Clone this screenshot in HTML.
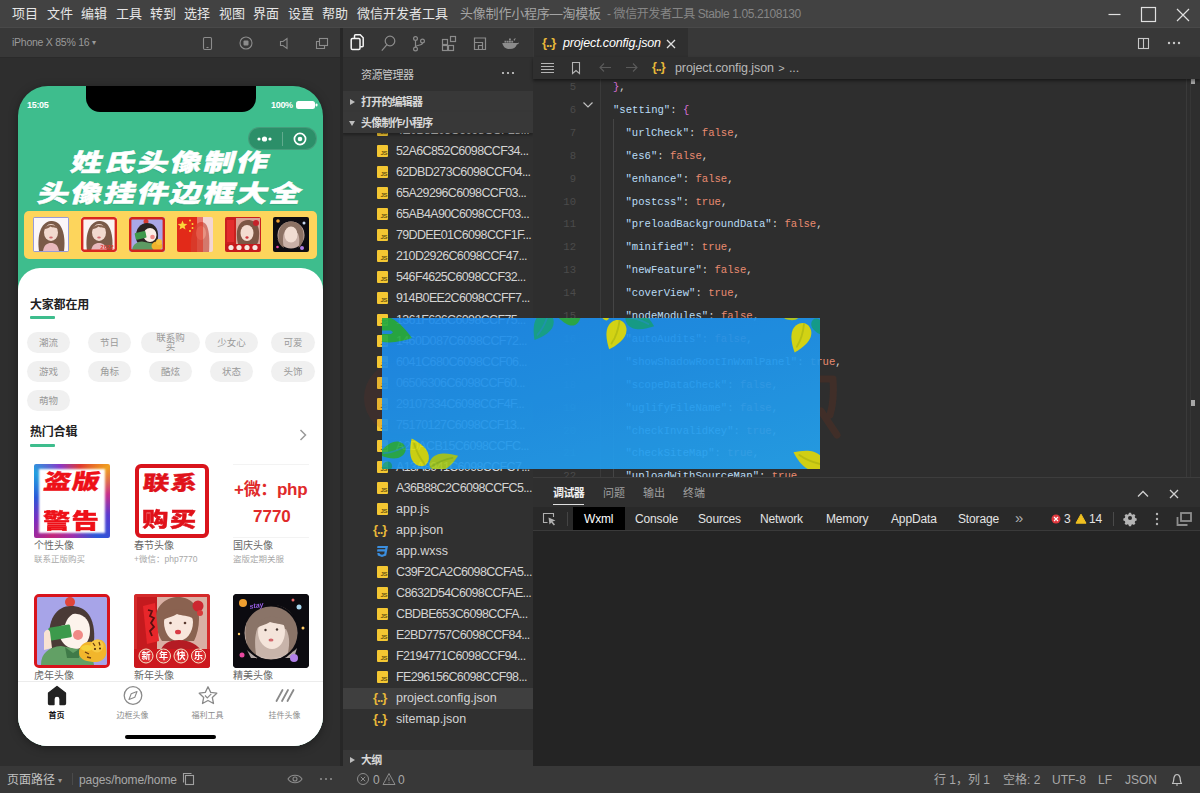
<!DOCTYPE html>
<html lang="zh-CN">
<head>
<meta charset="utf-8">
<title>微信开发者工具</title>
<style>
*{box-sizing:border-box;margin:0;padding:0}
html,body{width:1200px;height:793px;overflow:hidden;background:#2e2e2e}
body{position:relative;font-family:"Liberation Sans","Noto Sans CJK SC",sans-serif;color:#ccc;font-size:12px;line-height:1}
.abs{position:absolute}
.t{position:absolute;white-space:nowrap}
/* ---------- title bar ---------- */
#titlebar{left:0;top:0;width:1200px;height:28px;background:#424242;border-bottom:1px solid #494949}
#titlebar .m{top:6px;font-size:13px;color:#e6e6e6;line-height:15px}
#titlebar .ttl{top:7px;font-size:12px;color:#8f8f8f;line-height:14px}
/* ---------- simulator ---------- */
#simbar{left:0;top:28px;width:341px;height:30px;background:#383838;border-bottom:1px solid #2a2a2a}
#sim{left:0;top:58px;width:341px;height:708px;background:#2e2e2e}
#vsplit{left:340px;top:28px;width:3px;height:738px;background:#272727;z-index:3}
#phone{left:18px;top:86px;width:305px;height:660px;border-radius:30px;background:#3ebd8d;overflow:hidden;box-shadow:0 2px 10px rgba(0,0,0,.35)}

/* ---------- phone inner ---------- */
#phone .notch{left:68px;top:0;width:170px;height:26px;background:#000;border-radius:0 0 14px 14px}
#phone .st{top:14px;font-size:9px;font-weight:bold;color:#fff;line-height:11px;letter-spacing:-.3px}
#phone .cap{left:230px;top:41px;width:69px;height:23px;border-radius:12px;background:#2c8f69;border:1px solid rgba(255,255,255,.12)}
#phone .h1{left:0;width:306px;text-align:center;font-size:24px;font-weight:900;color:#fff;line-height:26px;letter-spacing:1.5px;transform:scaleX(1.3) skewX(-12deg);white-space:nowrap;-webkit-text-stroke:.5px #fff;text-shadow:0 1px 1px rgba(0,0,0,.12)}
#phone .banner{left:6px;top:125px;width:293px;height:48px;border-radius:5px;background:#fdd55c}
#phone .av{position:absolute;top:6px;width:36px;height:35px;border-radius:2px;overflow:hidden}
#phone .av svg{filter:blur(.45px)}
#phone .card{left:0;top:182px;width:305px;height:478px;background:#fff;border-radius:22px 22px 0 0}
#phone .hd{left:12px;font-size:12px;font-weight:bold;color:#222;line-height:14px;letter-spacing:-.2px}
#phone .ul{left:12px;width:25px;height:2.5px;background:#3ebd8d;border-radius:1px}
#phone .tag{position:absolute;height:21px;border-radius:11px;background:#f0f0f0;color:#9a9a9a;font-size:9.5px;line-height:21px;text-align:center;white-space:nowrap}
#phone .gi{position:absolute;width:76px;height:74px;border-radius:4px;overflow:hidden}
#phone .gl{position:absolute;font-size:10px;color:#666;line-height:12px;white-space:nowrap;margin-top:1.5px}
#phone .gs{position:absolute;font-size:8.5px;color:#a8a8a8;line-height:10px;white-space:nowrap;margin-top:.5px}
#phone .tb{left:0;top:595px;width:305px;height:65px;background:#fff;border-top:1px solid #ececec}
#phone .tl{position:absolute;top:625px;width:60px;text-align:center;font-size:8px;color:#8a8a8a;line-height:10px}
/* ---------- explorer ---------- */
#actbar{left:342px;top:28px;width:191px;height:29px;background:#353535}
#explorer{left:342px;top:58px;width:191px;height:709px;background:#303030;overflow:hidden}
.sec{position:absolute;left:0;width:191px;height:21px;background:#383838;font-weight:bold;color:#d8d8d8;font-size:11px;letter-spacing:-.8px}
.sec span{position:absolute;left:19px;top:5px;line-height:13px}
.sec i{position:absolute;left:8px;top:8px;width:0;height:0;border:3px solid transparent}
.sec i.r{border-left:5px solid #bdbdbd;border-right:0}
.sec i.d{border-top:5px solid #bdbdbd;border-bottom:0;left:7px;top:9px}
.row{position:absolute;left:0;width:191px;height:21px;font-size:12.5px;color:#d4d4d4}
.row span{position:absolute;left:54px;top:3px;line-height:15px;white-space:nowrap;letter-spacing:-.65px}
.row span.lc{letter-spacing:0}
.row.sel{background:#3f3f3f}
.js{position:absolute;left:35px;top:4px;width:11px;height:12px;background:#f4c732;border-radius:1px;font-style:normal;font-size:6px;font-weight:bold;color:#6b5210;line-height:6px;text-align:right;padding:5px 1px 0 0;letter-spacing:-.4px;overflow:hidden}
.jn{position:absolute;left:31px;top:2px;font-size:13px;color:#e8b93a;font-weight:bold;letter-spacing:-1px;line-height:15px}
/* ---------- editor ---------- */
#tabbar{left:533px;top:28px;width:667px;height:29px;background:#383838}
#tab{left:534px;top:28px;width:154px;height:29px;background:#2f2f2f}
#crumb{left:533px;top:57px;width:667px;height:22px;background:#2f2f2f;box-shadow:0 2px 3px rgba(0,0,0,.45)}
#editor{left:533px;top:79px;width:667px;height:401px;padding-top:0;background:#2e2e2e;overflow:hidden}
.ln{position:absolute;left:0;width:43px;text-align:right;font-family:"Liberation Mono","DejaVu Sans Mono",monospace;font-size:10.6px;color:#4b4b4b;line-height:14px}
.cl{position:absolute;font-family:"Liberation Mono","DejaVu Sans Mono",monospace;font-size:10.6px;line-height:14px;white-space:pre;color:#d4d4d4}
.k{color:#b9dcf5}.b{color:#e98b70}.p{color:#d4d4d4}.br{color:#d670d6}
/* ---------- debugger ---------- */
#dbg{left:533px;top:480px;width:667px;height:286px;background:#242424}
#dbghead{left:533px;top:477px;width:667px;height:30px;padding-top:0;background:#2f2f2f;border-top:1px solid #3d3d3d}
#dbgtabs{left:533px;top:507px;width:667px;height:24px;background:#292929;border-bottom:1px solid #3a3a3a}
.dt{position:absolute;top:512px;font-size:12px;color:#e4e4e4;line-height:14px;white-space:nowrap;letter-spacing:-.15px}
/* ---------- status ---------- */
#status{left:0;top:766px;width:1200px;height:27px;background:#383838}
#status .s{top:7px;font-size:12px;color:#a8a8a8;line-height:14px}
</style>
</head>
<body>
<!-- TITLE BAR -->
<div id="titlebar" class="abs">
 <span class="t m" style="left:12px">项目</span>
 <span class="t m" style="left:47px">文件</span>
 <span class="t m" style="left:81px">编辑</span>
 <span class="t m" style="left:116px">工具</span>
 <span class="t m" style="left:150px">转到</span>
 <span class="t m" style="left:184px">选择</span>
 <span class="t m" style="left:219px">视图</span>
 <span class="t m" style="left:253px">界面</span>
 <span class="t m" style="left:288px">设置</span>
 <span class="t m" style="left:322px">帮助</span>
 <span class="t m" style="left:357px">微信开发者工具</span>
 <span class="t ttl" style="left:460px;top:6px;font-size:13px;color:#a4a4a4;letter-spacing:-.2px;line-height:15px">头像制作小程序—淘模板</span>
 <span class="t ttl" style="left:607px;letter-spacing:-.4px;color:#868686">- 微信开发者工具 Stable 1.05.2108130</span>
 <svg class="abs" style="left:1100px;top:0" width="100" height="29" viewBox="0 0 100 29" fill="none" stroke="#e0e0e0" stroke-width="1.2">
  <path d="M8.5 14.5h12"/><rect x="41.5" y="7.5" width="14" height="14"/><path d="M77 9l12 12M89 9l-12 12"/>
 </svg>
</div>

<!-- SIMULATOR -->
<div id="simbar" class="abs">
 <span class="t" style="left:12px;top:8px;font-size:10.5px;color:#9a9a9a;line-height:13px;letter-spacing:-.25px">iPhone X 85% 16 <span style="font-size:8px;position:relative;top:-1px">▾</span></span>
 <svg class="abs" style="left:198px;top:5px" width="135" height="20" viewBox="0 0 135 20" fill="none" stroke="#8c8c8c" stroke-width="1.1">
  <rect x="5.500" y="4.500" width="8" height="12" rx="1.200"/><path d="M8.500 14.500h2"/>
  <circle cx="48" cy="10" r="6"/><rect x="45.500" y="7.500" width="5" height="5" rx="1" fill="#8c8c8c" stroke="none"/>
  <path d="M82.500 8.500h2.500l4-3v10l-4-3h-2.500z"/>
  <rect x="121.500" y="5.500" width="8" height="7"/><path d="M121.500 8.500h-3v7h8v-3"/>
 </svg>
</div>
<div id="sim" class="abs"></div>
<div id="vsplit" class="abs"></div>
<div id="phone" class="abs">
 <div class="abs notch"></div>
 <span class="t st" style="left:9px">15:05</span>
 <span class="t st" style="left:253px">100%</span>
 <svg class="abs" style="left:277px;top:14px" width="24" height="10" viewBox="0 0 24 10"><rect x="1" y="1" width="19" height="8" rx="2.500" fill="#fff"/><rect x="20.500" y="3.500" width="2" height="3" rx="1" fill="#fff"/></svg>
 <div class="abs cap">
  <svg class="abs" style="left:0;top:-.5px" width="67" height="22" viewBox="0 0 67 22"><circle cx="10" cy="11" r="1.600" fill="#fff"/><circle cx="15.500" cy="11" r="2.600" fill="#fff"/><circle cx="21" cy="11" r="1.600" fill="#fff"/><path d="M33.500 4v14" stroke="rgba(255,255,255,.25)" stroke-width="1"/><circle cx="51" cy="11" r="5.600" fill="none" stroke="#fff" stroke-width="1.700"/><circle cx="51" cy="11" r="2.300" fill="#fff"/></svg>
 </div>
 <div class="abs h1" style="top:64px">姓氏头像制作</div>
 <div class="abs h1" style="top:94.5px">头像挂件边框大全</div>
 <div class="abs banner">
  <div class="av" style="left:9px"><svg width="36" height="35" viewBox="0 0 36 35"><rect width="36" height="35" fill="#a58fd0"/><rect x="1" y="1" width="34" height="33" fill="#fbf6f8"/><path d="M6 34C4 20 7 5 18 4s15 14 13 30z" fill="#7a5a48"/><ellipse cx="18" cy="15.500" rx="7" ry="8.500" fill="#f1d9cf"/><path d="M10.500 13c1-6 13-7 15-1-3-2-6-1-8-2.500-2 2-5 2-7 3.500z" fill="#86624e"/><path d="M10 34c1-6 4-8 8-8s7 2 8 8z" fill="#e8b9bd"/><ellipse cx="18" cy="20.500" rx="1.800" ry="1" fill="#cf6a70"/><path d="M0 0h36v35h-36z" fill="none" stroke="#8fa2e0" stroke-width="1.500" opacity=".8"/></svg></div>
  <div class="av" style="left:57px"><svg width="36" height="35" viewBox="0 0 36 35"><rect width="36" height="35" fill="#fbf3f2"/><path d="M6 34C4 20 7 5 18 4s15 14 13 30z" fill="#7a5a48"/><ellipse cx="18" cy="15.500" rx="7" ry="8.500" fill="#f1d9cf"/><path d="M10.500 13c1-6 13-7 15-1-3-2-6-1-8-2.500-2 2-5 2-7 3.500z" fill="#86624e"/><path d="M10 34c1-6 4-8 8-8s7 2 8 8z" fill="#e8b9bd"/><ellipse cx="18" cy="20.500" rx="1.800" ry="1" fill="#cf6a70"/><text x="26" y="32" font-family="'Liberation Sans',sans-serif" font-size="6" font-weight="bold" fill="#e23a32" text-anchor="middle">2022</text><rect x="1.200" y="1.200" width="33.600" height="32.600" rx="2" fill="none" stroke="#d9271f" stroke-width="2.400"/></svg></div>
  <div class="av" style="left:105px"><svg width="36" height="35" viewBox="0 0 36 35"><rect width="36" height="35" fill="#a9a7e6"/><circle cx="17" cy="4.500" r="2.500" fill="#d63a30"/><path d="M7 22C6 11 12 6 18 6s12 4 11 15c-.5 3-2 5-3 6H10c-1.500-1-2.500-3-3-5z" fill="#2b2423"/><ellipse cx="21" cy="18" rx="6.500" ry="7" fill="#fbeee6"/><circle cx="23.500" cy="20" r="2.300" fill="#ef8a86"/><path d="M3 35c0-7 4-10 10-10.500l8 1.500c5 .5 8 4 8.500 9z" fill="#5d9a63"/><rect x="6" y="15" width="11" height="7" rx="1" transform="rotate(-12 11 18)" fill="#3f9a4b"/><ellipse cx="28" cy="29" rx="5.500" ry="4.500" fill="#f0b22c"/><circle cx="30" cy="25" r="3" fill="#f4c23c"/><rect x="1.200" y="1.200" width="33.600" height="32.600" rx="2" fill="none" stroke="#d3231d" stroke-width="2.400"/></svg></div>
  <div class="av" style="left:153px"><svg width="36" height="35" viewBox="0 0 36 35"><rect width="36" height="35" fill="#e22a1a"/><rect x="20" width="16" height="35" fill="#f4d6d2"/><path d="M14 35C13 20 16 6 24 5s9 14 8 30z" fill="#c8584a" opacity=".75"/><ellipse cx="24" cy="16" rx="5" ry="7" fill="#ec9a88" opacity=".8"/><rect width="26" height="35" fill="#e22a1a" opacity=".55"/><path d="M5.500 3.500l1.300 3.300 3.500.2-2.700 2.200.9 3.400-3-1.900-3 1.900.9-3.400-2.700-2.200 3.500-.2z" fill="#fbd63a"/><circle cx="13" cy="3.500" r="1" fill="#fbd63a"/><circle cx="15.500" cy="7" r="1" fill="#fbd63a"/><circle cx="15.500" cy="11" r="1" fill="#fbd63a"/><circle cx="13" cy="14" r="1" fill="#fbd63a"/></svg></div>
  <div class="av" style="left:201px"><svg width="36" height="35" viewBox="0 0 36 35"><rect width="36" height="35" fill="#c9201f"/><rect x="11" y="1" width="24" height="28" fill="#d8a598"/><path d="M12 20C11 9 16 3 23 3s12 5 11 16c0 4-1 7-3 10H14c-1-2-2-5-2-9z" fill="#7d5644"/><ellipse cx="22" cy="16" rx="6.500" ry="8" fill="#f4dcd0"/><ellipse cx="22" cy="20.500" rx="1.600" ry="1.200" fill="#cf3a40"/><circle cx="31" cy="6" r="3" fill="#c5222a"/><rect x="2" y="3" width="7" height="22" fill="#e22c2c"/><rect y="27" width="36" height="8" fill="#c61a1c"/><g fill="#f6e8e0"><circle cx="6" cy="30.500" r="2.600"/><circle cx="14" cy="30.500" r="2.600"/><circle cx="22" cy="30.500" r="2.600"/><circle cx="30" cy="30.500" r="2.600"/></g></svg></div>
  <div class="av" style="left:249px"><svg width="36" height="35" viewBox="0 0 36 35"><rect width="36" height="35" fill="#0d0c11"/><circle cx="18" cy="18" r="13.500" fill="#c9b0a6"/><path d="M5.500 22C4 10 11 4.500 18 4.500s14 5.500 12.500 17c-1 5-3 8-5 9.500 1-5 1.500-11-1-15-4 .5-9-.5-12-3-3 4-3 12-1.500 18-3-2-5.500-4.500-6.500-9z" fill="#8c7264"/><ellipse cx="18" cy="17.500" rx="6.500" ry="8" fill="#f1ddd2"/><circle cx="5" cy="4" r="1.800" fill="#f0a030"/><circle cx="31" cy="6" r="1.500" fill="#c8d8f0"/><circle cx="4.500" cy="30" r="1.300" fill="#e848a0"/><circle cx="29" cy="31" r="2" fill="#b080e8"/></svg></div>
 </div>
 <div class="abs card"></div>
 <span class="t hd" style="top:212px">大家都在用</span><div class="abs ul" style="top:230px"></div>
 <div class="tag" style="left:9px;top:246px;width:43px">潮流</div>
 <div class="tag" style="left:70px;top:246px;width:43px">节日</div>
 <div class="tag" style="left:123px;top:246px;width:59px;line-height:8.5px;padding-top:2px;white-space:normal"><span style="display:block">联系购</span><span style="display:block">买</span></div>
 <div class="tag" style="left:187px;top:246px;width:53px">少女心</div>
 <div class="tag" style="left:253px;top:246px;width:44px">可爱</div>
 <div class="tag" style="left:9px;top:275px;width:43px">游戏</div>
 <div class="tag" style="left:70px;top:275px;width:43px">角标</div>
 <div class="tag" style="left:131px;top:275px;width:43px">酷炫</div>
 <div class="tag" style="left:192px;top:275px;width:43px">状态</div>
 <div class="tag" style="left:253px;top:275px;width:44px">头饰</div>
 <div class="tag" style="left:9px;top:304px;width:43px">萌物</div>
 <span class="t hd" style="top:339px">热门合辑</span><div class="abs ul" style="top:358px"></div>
 <svg class="abs" style="left:280px;top:342px" width="10" height="14" viewBox="0 0 10 14" fill="none" stroke="#9a9a9a" stroke-width="1.500"><path d="M2.500 2l5 5-5 5"/></svg>
 <div class="gi" style="left:16px;top:378px;background:#fff;border-radius:2px">
  <div class="abs" style="inset:0;background:conic-gradient(from 210deg,#c3267a,#7a2cc0,#2a58d8,#22a0e0,#8a38c8,#e03a30,#f0a020,#c8308a,#5a3ad0,#2a58d8,#9a30b0,#c3267a)"></div>
  <div class="abs" style="left:7px;top:7px;right:7px;bottom:7px;background:#fff;box-shadow:0 0 2px 2px #fff"></div>
  <span class="t" style="left:10px;top:5px;font-size:21px;font-weight:900;color:#ee1018;line-height:26px;letter-spacing:1px;transform:skewX(-10deg) scaleX(1.3);transform-origin:0 50%;-webkit-text-stroke:.4px #ee1018">盗版</span>
  <span class="t" style="left:9px;top:44px;font-size:21px;font-weight:900;color:#ee1018;line-height:26px;letter-spacing:1px;transform:scaleX(1.3);transform-origin:0 50%;-webkit-text-stroke:.4px #ee1018">警告</span>
 </div>
 <div class="gi" style="left:117px;top:378px;width:74px;background:#fff;border:4px solid #d9141c;border-radius:6px">
  <span class="t" style="left:4px;top:2px;font-size:20px;font-weight:900;color:#e0121a;line-height:26px;letter-spacing:1px;transform:skewX(-6deg) scaleX(1.32);transform-origin:0 50%;-webkit-text-stroke:.4px #e0121a">联系</span>
  <span class="t" style="left:3px;top:39px;font-size:20px;font-weight:900;color:#e0121a;line-height:26px;letter-spacing:1px;transform:scaleX(1.32);transform-origin:0 50%;-webkit-text-stroke:.4px #e0121a">购买</span>
 </div>
 <div class="gi" style="left:215px;top:378px;background:#fff;border-top:1px solid #f3f3f3;border-bottom:1px solid #f3f3f3;border-radius:0">
  <span class="t" style="left:1px;top:14px;font-size:17px;font-weight:bold;color:#e02a2a;line-height:22px;letter-spacing:-.3px">+微：php</span>
  <span class="t" style="left:20px;top:41px;font-size:17px;font-weight:bold;color:#e02a2a;line-height:22px">7770</span>
 </div>
 <span class="gl" style="left:16px;top:452px">个性头像</span><span class="gs" style="left:16px;top:467px">联系正版购买</span>
 <span class="gl" style="left:116px;top:452px">春节头像</span><span class="gs" style="left:116px;top:467px">+微信：php7770</span>
 <span class="gl" style="left:215px;top:452px">国庆头像</span><span class="gs" style="left:215px;top:467px">盗版定期关服</span>

 <div class="gi" style="left:16px;top:508px;background:#a9a6e6;border:3px solid #d8141c;border-radius:5px">
  <svg class="abs" style="left:0;top:0;filter:blur(.4px)" width="70" height="68" viewBox="0 0 70 68">
   <rect width="70" height="68" fill="#a7a4e8"/>
   <circle cx="33" cy="5" r="5" fill="#e0453a"/>
   <path d="M13 48C9 22 20 9 34 9s25 10 23 36c-1 8-4 12-7 15H20c-4-3-6-6-7-12z" fill="#4a3a36"/>
   <path d="M22 30c2-10 10-14 18-13 8 1 13 7 13 17 0 10-6 18-15 18S20 42 22 30z" fill="#fdf3ec"/>
   <path d="M20 30c1-12 10-17 20-15-6 2-10 6-12 13-3 1-6 1-8 2z" fill="#4a3a36"/>
   <circle cx="41" cy="38" r="5" fill="#f08a86"/>
   <path d="M4 68c0-12 8-18 20-19l16 3c10 1 16 7 17 16z" fill="#62a065"/>
   <path d="M28 50l8 6 8-5-2 10-12 0z" fill="#3f7a48"/>
   <rect x="12" y="29" width="22" height="13" rx="1.500" transform="rotate(-10 23 35)" fill="#3c9a4c"/>
   <path d="M7 36c2-4 5-4 6-1l2 16-8 2z" fill="#f8e2d2"/>
   <path d="M42 56c0-8 6-12 13-11 6-5 14-2 14 6 2 7-2 14-10 14s-17-2-17-9z" fill="#f2b62c"/>
   <circle cx="60" cy="49" r="6.500" fill="#f7c844"/>
   <path d="M56 46l2 3M62 45l1 3.500M48 55l4 2M50 60l4 1" stroke="#6a3c10" stroke-width="1.300"/>
   <circle cx="58" cy="52" r="1" fill="#40220a"/><circle cx="63" cy="51.500" r="1" fill="#40220a"/>
   <ellipse cx="50" cy="51" rx="6" ry="3" fill="#f6d23c"/>
  </svg>
 </div>
 <div class="gi" style="left:116px;top:508px;background:#c81e22;border-radius:3px">
  <svg class="abs" style="left:0;top:0;filter:blur(.4px)" width="76" height="74" viewBox="0 0 76 74">
   <rect width="76" height="74" fill="#d42a2a"/>
   <rect x="3" y="3" width="70" height="56" fill="#d9b0a4"/>
   <rect x="3" y="3" width="20" height="56" fill="#c41a1e"/>
   <path d="M22 24c0-14 12-21 22-21s22 7 21 22c0 8-2 16-5 22H28c-4-6-6-14-6-23z" fill="#8a6250"/>
   <path d="M30 28c0-8 6-12 14-12s15 4 15 12c0 11-7 19-15 19s-14-8-14-19z" fill="#f8e6dc"/>
   <path d="M29 26c1-14 28-15 31-1-6-4-12-3-17-5-4 3-9 3-14 6z" fill="#8a6250"/>
   <ellipse cx="44" cy="38" rx="3" ry="2.300" fill="#d83a44"/>
   <circle cx="36.500" cy="29" r="1.300" fill="#5a3a30"/><circle cx="51" cy="29" r="1.300" fill="#5a3a30"/>
   <circle cx="64" cy="12" r="5.500" fill="#cc2630"/><circle cx="66" cy="19" r="3" fill="#d83a3a"/>
   <path d="M9 12l12-3 4 38-12 3z" fill="#e8262a"/>
   <path d="M14 16l4 1-2 5 4 2-3 5 3 4-4 4 2 5" stroke="#5a1010" stroke-width="1.800" fill="none"/>
   <path d="M26 59c2-10 10-13 19-13s20 4 23 13z" fill="#b41c24"/>
   <rect x="0" y="55" width="76" height="19" fill="#cc181e"/>
   <g fill="#dc2c30" stroke="#f3e6c8" stroke-width="1"><circle cx="12" cy="62" r="7"/><circle cx="29.500" cy="62" r="7"/><circle cx="47" cy="62" r="7"/><circle cx="64.500" cy="62" r="7"/></g>
   <g font-family="'Liberation Sans','Noto Sans CJK SC',sans-serif" font-size="9" font-weight="bold" fill="#fff" text-anchor="middle"><text x="12" y="65.300">新</text><text x="29.500" y="65.300">年</text><text x="47" y="65.300">快</text><text x="64.500" y="65.300">乐</text></g>
  </svg>
 </div>
 <div class="gi" style="left:215px;top:508px;background:#0b0a0e;border-radius:4px">
  <svg class="abs" style="left:0;top:0;filter:blur(.4px)" width="76" height="74" viewBox="0 0 76 74">
   <rect width="76" height="74" fill="#0c0b10"/>
   <circle cx="38" cy="39" r="27" fill="#c8b4aa"/>
   <path d="M13 46c-4-24 10-35 26-35s28 12 25 34c-2 10-6 16-10 19 2-10 4-20-1-29-9 1-19-1-25-7-7 8-7 25-4 37-6-4-9-9-11-19z" fill="#8a7468"/>
   <path d="M25 38c0-9 6-13 14-13s13 4 13 12c0 11-6 18-13 18S25 48 25 38z" fill="#f4e4da"/>
   <path d="M24 34c1-14 27-15 29-2-6-3-11-2-16-4-4 3-9 3-13 6z" fill="#8a7468"/>
   <ellipse cx="38" cy="46" rx="2.500" ry="1.500" fill="#d2686c"/>
   <circle cx="32.500" cy="36" r="1.200" fill="#4a3a34"/><circle cx="44" cy="35.500" r="1.200" fill="#4a3a34"/>
   <path d="M14 56c8 10 38 12 50-2l-3 10H18z" fill="#d8ccc8" opacity=".8"/>
   <circle cx="38" cy="39" r="27.500" fill="none" stroke="#0c0b10" stroke-width="2"/>
   <circle cx="10" cy="9" r="4" fill="#f0a030"/><circle cx="66" cy="13" r="2.500" fill="#a8d8f0"/><circle cx="9" cy="61" r="2.500" fill="#e848a0"/><circle cx="61" cy="64" r="4" fill="#b080e8"/><circle cx="60" cy="6" r="1.500" fill="#e86a6a"/><circle cx="70" cy="34" r="1.500" fill="#fc6"/><circle cx="6" cy="40" r="1.200" fill="#fc6"/>
   <text x="17" y="15" font-family="'Liberation Sans',sans-serif" font-size="7" font-style="italic" font-weight="bold" fill="#9a60e8" transform="rotate(-10 17 15)">stay</text>
  </svg>
 </div>
 <span class="gl" style="left:16px;top:582px">虎年头像</span>
 <span class="gl" style="left:116px;top:582px">新年头像</span>
 <span class="gl" style="left:215px;top:582px">精美头像</span>
 <div class="abs tb"></div>
 <svg class="abs" style="left:1.5px;top:596px" width="304" height="26" viewBox="0 0 304 26" fill="none" stroke="#8a8a8a" stroke-width="1.300">
  <path d="M37 4.500l-8.500 6.500v10.500a1 1 0 0 0 1 1h4.500v-5.500a3 3 0 0 1 6 0v5.500h4.500a1 1 0 0 0 1-1v-10.500z" fill="#222" stroke="#222" stroke-linejoin="round"/>
  <circle cx="113" cy="13.500" r="8.800"/><path d="M117 9.500l-2.200 5.800-5.800 2.200 2.200-5.800z" stroke-width="1.100" stroke-linejoin="round"/>
  <path d="M188 4.800l2.700 5.600 6.100.8-4.500 4.200 1.200 6.100-5.500-3-5.500 3 1.200-6.100-4.500-4.200 6.100-.8z" stroke-linejoin="round"/><path d="M185 13.500l2.300 2.300 4-4" stroke-width="1.200"/>
  <path d="M259 19l6-11M264.500 19l6-11M270 19l6-11" stroke-width="1.800" stroke-linecap="round" transform="translate(-2.500 0)"/>
 </svg>
 <span class="tl" style="left:8.5px;color:#111;font-weight:bold">首页</span>
 <span class="tl" style="left:84.5px">边框头像</span>
 <span class="tl" style="left:159.5px">福利工具</span>
 <span class="tl" style="left:236.5px">挂件头像</span>
 <div class="abs" style="left:107px;top:649px;width:91px;height:4px;border-radius:2px;background:#000"></div>
</div>

<!-- EXPLORER -->
<div id="actbar" class="abs">
 <svg class="abs" style="left:0;top:0" width="191" height="30" viewBox="0 0 191 30" fill="none" stroke="#8c8c8c" stroke-width="1.200">
  <g stroke="#f4f4f4" stroke-width="1.500"><path d="M12.500 10.500v-2.700a1 1 0 0 1 1-1h4.700l3 3v8a1 1 0 0 1-1 1h-2"/><rect x="9.200" y="10.500" width="8.800" height="11" rx="1.200"/></g>
  <circle cx="48" cy="13" r="4.800"/><path d="M45 16.700l-5.200 6"/>
  <circle cx="73.500" cy="10.500" r="1.900"/><circle cx="73.500" cy="21" r="1.900"/><circle cx="80.500" cy="13" r="1.900"/><path d="M73.500 12.400v6.700M80.500 15c0 3-7 1.500-7 4.200"/>
  <rect x="100.500" y="11.500" width="5" height="5"/><rect x="100.500" y="17.500" width="5" height="5"/><rect x="106.500" y="17.500" width="5" height="5"/><rect x="108.500" y="8.500" width="5" height="5"/>
  <path d="M132.500 10v11.500h11v-11.500z"/><path d="M132.500 14.500h8v7M136.500 21.500v-4h4"/>
  <g fill="#8c8c8c" stroke="none" transform="translate(41 4.500) scale(.75)"><path d="M159 14h18c1 0 3 .5 4-1 .5 2-1 3-2.500 3-1.500 4-4.500 6-9.500 6s-8.500-2-10-8z"/><rect x="162" y="11" width="2.500" height="2.500"/><rect x="165" y="11" width="2.500" height="2.500"/><rect x="168" y="11" width="2.500" height="2.500"/><rect x="168" y="8" width="2.500" height="2.500"/><rect x="171" y="11" width="2.500" height="2.500"/><path d="M174 10c1-2 2-3 3-2-1 1-1 2-1 3z"/></g>
 </svg>
</div>
<div id="explorer" class="abs">
 <div class="row" style="top:62.2px"><i class="js">JS</i><span>4E0B8E05C6098CCF28...</span></div>
 <div class="row" style="top:83.2px"><i class="js">JS</i><span>52A6C852C6098CCF34...</span></div>
 <div class="row" style="top:104.3px"><i class="js">JS</i><span>62DBD273C6098CCF04...</span></div>
 <div class="row" style="top:125.3px"><i class="js">JS</i><span>65A29296C6098CCF03...</span></div>
 <div class="row" style="top:146.3px"><i class="js">JS</i><span>65AB4A90C6098CCF03...</span></div>
 <div class="row" style="top:167.4px"><i class="js">JS</i><span>79DDEE01C6098CCF1F...</span></div>
 <div class="row" style="top:188.4px"><i class="js">JS</i><span>210D2926C6098CCF47...</span></div>
 <div class="row" style="top:209.4px"><i class="js">JS</i><span>546F4625C6098CCF32...</span></div>
 <div class="row" style="top:230.4px"><i class="js">JS</i><span>914B0EE2C6098CCFF7...</span></div>
 <div class="row" style="top:251.5px"><i class="js">JS</i><span>1361F626C6098CCF75...</span></div>
 <div class="row" style="top:272.5px"><i class="js">JS</i><span>1460D087C6098CCF72...</span></div>
 <div class="row" style="top:293.5px"><i class="js">JS</i><span>6041C680C6098CCF06...</span></div>
 <div class="row" style="top:314.6px"><i class="js">JS</i><span>06506306C6098CCF60...</span></div>
 <div class="row" style="top:335.6px"><i class="js">JS</i><span>29107334C6098CCF4F...</span></div>
 <div class="row" style="top:356.6px"><i class="js">JS</i><span>75170127C6098CCF13...</span></div>
 <div class="row" style="top:377.7px"><i class="js">JS</i><span>A2DACB15C6098CCFC...</span></div>
 <div class="row" style="top:398.7px"><i class="js">JS</i><span>A13A8941C6098CCFC7...</span></div>
 <div class="row" style="top:419.7px"><i class="js">JS</i><span>A36B88C2C6098CCFC5...</span></div>
 <div class="row" style="top:440.7px"><i class="js">JS</i><span class="lc">app.js</span></div>
 <div class="row" style="top:461.8px"><b class="jn">{..}</b><span class="lc">app.json</span></div>
 <div class="row" style="top:482.8px"><svg class="abs" style="left:33px;top:4px" width="14" height="13" viewBox="0 0 14 13"><path d="M2.500 1h10.500l-1.800 9.500-4.200 1.500-4.200-1.500-.5-2.500h2.300l.2 1 2.200.7 2.200-.7.500-2.500h-7.700l.4-2.200h7.700l.3-1.300h-8.300z" fill="#3b8fe0"/></svg><span class="lc">app.wxss</span></div>
 <div class="row" style="top:503.8px"><i class="js">JS</i><span>C39F2CA2C6098CCFA5...</span></div>
 <div class="row" style="top:524.9px"><i class="js">JS</i><span>C8632D54C6098CCFAE...</span></div>
 <div class="row" style="top:545.9px"><i class="js">JS</i><span>CBDBE653C6098CCFA...</span></div>
 <div class="row" style="top:566.9px"><i class="js">JS</i><span>E2BD7757C6098CCF84...</span></div>
 <div class="row" style="top:588.0px"><i class="js">JS</i><span>F2194771C6098CCF94...</span></div>
 <div class="row" style="top:609.0px"><i class="js">JS</i><span>FE296156C6098CCF98...</span></div>
 <div class="row sel" style="top:630.0px"><b class="jn">{..}</b><span class="lc">project.config.json</span></div>
 <div class="row" style="top:651.0px"><b class="jn">{..}</b><span class="lc">sitemap.json</span></div>
 <div class="abs" style="left:0;top:0;width:191px;height:33px;background:#303030"></div>
 <span class="t" style="left:19px;top:11px;font-size:11px;color:#c8c8c8;line-height:13px;letter-spacing:-.5px">资源管理器</span>
 <svg class="abs" style="left:158px;top:12px" width="16" height="6" viewBox="0 0 16 6" fill="#d0d0d0"><circle cx="3" cy="3" r="1.100"/><circle cx="8" cy="3" r="1.100"/><circle cx="13" cy="3" r="1.100"/></svg>
 <div class="sec" style="top:33px"><i class="r"></i><span>打开的编辑器</span></div>
 <div class="sec" style="top:54px;box-shadow:0 2px 3px rgba(0,0,0,.35)"><i class="d"></i><span>头像制作小程序</span></div>
 <div class="sec" style="top:692px;height:17px"><i class="r" style="top:7px"></i><span style="top:4px">大纲</span></div>
</div>

<!-- EDITOR -->
<div id="tabbar" class="abs"></div>
<div id="tab" class="abs">
 <b class="t" style="left:8px;top:7px;font-size:13px;color:#e8b93a;letter-spacing:-1px;line-height:15px">{..}</b>
 <span class="t" style="left:29px;top:8px;font-size:12.5px;font-style:italic;color:#fff;line-height:15px;letter-spacing:-.15px">project.config.json</span>
 <svg class="abs" style="left:132px;top:11px" width="10" height="10" viewBox="0 0 10 10" stroke="#e0e0e0" stroke-width="1.300"><path d="M1 1l8 8M9 1l-8 8"/></svg>
</div>
<svg class="abs" style="left:1130px;top:34px" width="60" height="20" viewBox="0 0 60 20" fill="none" stroke="#c8c8c8" stroke-width="1.100"><rect x="8.500" y="4.500" width="10" height="10"/><path d="M13.500 4.500v10"/><g fill="#c8c8c8" stroke="none"><circle cx="39" cy="9" r="1.200"/><circle cx="44" cy="9" r="1.200"/><circle cx="49" cy="9" r="1.200"/></g></svg>
<div id="editor" class="abs">
 <div class="abs" style="left:67px;top:0;width:1px;height:400px;background:#3a3a3a"></div>
 <div class="abs" style="left:80px;top:40px;width:1px;height:360px;background:#454545"></div>
 <span class="ln" style="top:1.0px">5</span><span class="cl" style="left:80px;top:1.0px"><span class="br">}</span><span class="p">,</span></span>
 <span class="ln" style="top:23.9px">6</span><span class="cl" style="left:80px;top:23.9px"><span class="k">"setting"</span>: <span class="br">{</span></span>
 <span class="ln" style="top:46.8px">7</span><span class="cl" style="left:92.5px;top:46.8px"><span class="k">"urlCheck"</span>: <span class="b">false</span>,</span>
 <span class="ln" style="top:69.7px">8</span><span class="cl" style="left:92.5px;top:69.7px"><span class="k">"es6"</span>: <span class="b">false</span>,</span>
 <span class="ln" style="top:92.6px">9</span><span class="cl" style="left:92.5px;top:92.6px"><span class="k">"enhance"</span>: <span class="b">false</span>,</span>
 <span class="ln" style="top:115.5px">10</span><span class="cl" style="left:92.5px;top:115.5px"><span class="k">"postcss"</span>: <span class="b">true</span>,</span>
 <span class="ln" style="top:138.4px">11</span><span class="cl" style="left:92.5px;top:138.4px"><span class="k">"preloadBackgroundData"</span>: <span class="b">false</span>,</span>
 <span class="ln" style="top:161.3px">12</span><span class="cl" style="left:92.5px;top:161.3px"><span class="k">"minified"</span>: <span class="b">true</span>,</span>
 <span class="ln" style="top:184.2px">13</span><span class="cl" style="left:92.5px;top:184.2px"><span class="k">"newFeature"</span>: <span class="b">false</span>,</span>
 <span class="ln" style="top:207.1px">14</span><span class="cl" style="left:92.5px;top:207.1px"><span class="k">"coverView"</span>: <span class="b">true</span>,</span>
 <span class="ln" style="top:230.0px">15</span><span class="cl" style="left:92.5px;top:230.0px"><span class="k">"nodeModules"</span>: <span class="b">false</span>,</span>
 <span class="ln" style="top:252.9px">16</span><span class="cl" style="left:92.5px;top:252.9px"><span class="k">"autoAudits"</span>: <span class="b">false</span>,</span>
 <span class="ln" style="top:275.8px">17</span><span class="cl" style="left:92.5px;top:275.8px"><span class="k">"showShadowRootInWxmlPanel"</span>: <span class="b">true</span>,</span>
 <span class="ln" style="top:298.7px">18</span><span class="cl" style="left:92.5px;top:298.7px"><span class="k">"scopeDataCheck"</span>: <span class="b">false</span>,</span>
 <span class="ln" style="top:321.6px">19</span><span class="cl" style="left:92.5px;top:321.6px"><span class="k">"uglifyFileName"</span>: <span class="b">false</span>,</span>
 <span class="ln" style="top:344.5px">20</span><span class="cl" style="left:92.5px;top:344.5px"><span class="k">"checkInvalidKey"</span>: <span class="b">true</span>,</span>
 <span class="ln" style="top:367.4px">21</span><span class="cl" style="left:92.5px;top:367.4px"><span class="k">"checkSiteMap"</span>: <span class="b">true</span>,</span>
 <span class="ln" style="top:390.3px">22</span><span class="cl" style="left:92.5px;top:390.3px"><span class="k">"uploadWithSourceMap"</span>: <span class="b">true</span></span>
 <svg class="abs" style="left:49px;top:21px" width="12" height="10" viewBox="0 0 12 10" fill="none" stroke="#c0c0c0" stroke-width="1.200"><path d="M1.500 2.500l4.500 4.500 4.500-4.500"/></svg>
 <div class="abs" style="left:653px;top:0;width:1px;height:400px;background:#3a3a3a"></div>
 <div class="abs" style="left:657px;top:0;width:1px;height:400px;background:#363636"></div>
 <div class="abs" style="left:658px;top:321px;width:4px;height:6px;background:#a8a8a8"></div>
 <div class="abs" style="left:658px;top:0;width:4px;height:5px;background:#a8a8a8"></div>
</div>
<div id="crumb" class="abs">
 <svg class="abs" style="left:0;top:0" width="120" height="22" viewBox="0 0 120 22" fill="none" stroke="#b4b4b4" stroke-width="1.100">
  <path d="M8 6.500h13M8 9.500h13M8 12.500h13M8 15.500h13" stroke-width="1"/>
  <path d="M39.500 5.500h7v11l-3.500-3-3.500 3z"/>
  <g stroke="#5a5a5a"><path d="M78 10.500h-11M71 6.500l-4 4 4 4"/><path d="M93 10.500h11M100 6.500l4 4-4 4"/></g>
 </svg>
 <b class="t" style="left:119px;top:3px;font-size:12.5px;color:#e8b93a;letter-spacing:-1px;line-height:15px">{..}</b>
 <span class="t" style="left:142px;top:4px;font-size:12.5px;color:#b8b8b8;line-height:15px;letter-spacing:-.1px">project.config.json <span style="font-size:11px;position:relative;top:-.5px;margin:0 1px">&gt;</span> ...</span>
</div>

<!-- DEBUGGER -->
<div id="dbg" class="abs"></div>
<div id="dbghead" class="abs">
 <span class="t" style="left:20px;top:9px;font-size:11px;font-weight:bold;color:#f0f0f0;line-height:13px;letter-spacing:-.6px">调试器</span>
 <div class="abs" style="left:20px;top:26px;width:31px;height:1px;background:#e0e0e0"></div>
 <span class="t" style="left:70px;top:9px;font-size:11px;color:#a0a0a0;line-height:13px">问题</span>
 <span class="t" style="left:110px;top:9px;font-size:11px;color:#a0a0a0;line-height:13px">输出</span>
 <span class="t" style="left:150px;top:9px;font-size:11px;color:#a0a0a0;line-height:13px">终端</span>
 <svg class="abs" style="left:600px;top:7px" width="60" height="18" viewBox="0 0 60 18" fill="none" stroke="#d0d0d0" stroke-width="1.300"><path d="M5 11.500l5-5 5 5"/><path d="M37 5l8 8M45 5l-8 8"/></svg>
</div>
<div id="dbgtabs" class="abs">
 <svg class="abs" style="left:8px;top:4px" width="18" height="16" viewBox="0 0 18 16" fill="none" stroke="#b0b0b0" stroke-width="1.100"><path d="M12.500 6v-3.500h-10v9h4"/><path d="M7.500 6.500l7 3-3 1 2.500 3-1.200 1-2.500-3-1.800 2z" fill="#b0b0b0" stroke="none"/></svg>
 <div class="abs" style="left:34px;top:5px;width:1px;height:14px;background:#444"></div>
 <div class="abs" style="left:40px;top:0;width:52px;height:23px;background:#000"></div>
</div>
<span class="dt" style="left:584px;color:#fff">Wxml</span>
<span class="dt" style="left:635px">Console</span>
<span class="dt" style="left:698px">Sources</span>
<span class="dt" style="left:760px">Network</span>
<span class="dt" style="left:826px">Memory</span>
<span class="dt" style="left:891px">AppData</span>
<span class="dt" style="left:958px">Storage</span>
<span class="dt" style="left:1015px;top:511px;font-size:15px;color:#b0b0b0">»</span>
<svg class="abs" style="left:1045px;top:509px" width="155" height="20" viewBox="0 0 155 20">
 <circle cx="11" cy="10" r="4.500" fill="#e0383e"/><path d="M9 8l4 4M13 8l-4 4" stroke="#fff" stroke-width="1.100"/>
 <path d="M36 5.200l5 9h-10z" fill="#f0c020" stroke="#f0c020" stroke-width="1" stroke-linejoin="round"/>
 <path d="M68.500 3v14" stroke="#4a4a4a"/>
 <g transform="translate(85 8) scale(.88)" fill="#b4b4b4"><path d="M-1.300 -6.300h2.600l.4 1.700 1.500.7 1.500-.9 1.800 1.800-.9 1.500.7 1.500 1.700.4v2.600l-1.700.4-.7 1.500.9 1.500-1.800 1.800-1.500-.9-1.500.7-.4 1.700h-2.600l-.4-1.700-1.500-.7-1.500.9-1.800-1.800.9-1.500-.7-1.500-1.700-.4v-2.600l1.700-.4.700-1.500-.9-1.500 1.800-1.800 1.500.9 1.500-.7z" transform="scale(.95) translate(0 1.300)"/><circle cx="0" cy="1.200" r="2.300" fill="#292929"/></g>
 <g fill="#b4b4b4"><circle cx="112" cy="5" r="1.200"/><circle cx="112" cy="10" r="1.200"/><circle cx="112" cy="15" r="1.200"/></g>
 <g fill="none" stroke="#8e8e8e" stroke-width="1.800"><rect x="136" y="4" width="10" height="8"/><path d="M132.500 8v8h10"/></g>
</svg>
<span class="dt" style="left:1064px;font-size:12px">3</span>
<span class="dt" style="left:1089px;font-size:12px">14</span>

<!-- STATUS BAR -->
<div id="status" class="abs">
 <span class="t s" style="left:7px;color:#c0c0c0">页面路径 <span style="font-size:8px;position:relative;top:-1px;color:#999">▾</span></span>
 <div class="abs" style="left:72px;top:7px;width:1px;height:12px;background:#4a4a4a"></div>
 <span class="t s" style="left:79px;letter-spacing:-.1px">pages/home/home</span>
 <svg class="abs" style="left:181px;top:6px" width="16" height="15" viewBox="0 0 16 15" fill="none" stroke="#a0a0a0" stroke-width="1.100"><rect x="4.500" y="3.500" width="8" height="9"/><path d="M2.500 10.500v-9h8"/></svg>
 <svg class="abs" style="left:285px;top:5px" width="52" height="16" viewBox="0 0 52 16" fill="none" stroke="#8c8c8c" stroke-width="1.100"><path d="M3 8c3-5 11-5 14 0-3 5-11 5-14 0z"/><circle cx="10" cy="8" r="2"/><g fill="#8c8c8c" stroke="none"><circle cx="36" cy="8" r="1.100"/><circle cx="41" cy="8" r="1.100"/><circle cx="46" cy="8" r="1.100"/></g></svg>
 <svg class="abs" style="left:355px;top:5px" width="56" height="16" viewBox="0 0 56 16" fill="none" stroke="#8c8c8c" stroke-width="1"><circle cx="8" cy="8" r="5.500"/><path d="M5.800 5.800l4.400 4.400M10.200 5.800l-4.400 4.400"/><path d="M34 2.500l6 11h-12z" stroke-linejoin="round"/><path d="M34 6.500v3.500M34 11.300v1"/></svg>
 <span class="t s" style="left:373px">0</span><span class="t s" style="left:398px">0</span>
 <span class="t s" style="left:934px">行 1，列 1</span>
 <span class="t s" style="left:1003px">空格: 2</span>
 <span class="t s" style="left:1052px">UTF-8</span>
 <span class="t s" style="left:1098px">LF</span>
 <span class="t s" style="left:1125px">JSON</span>
 <svg class="abs" style="left:1169px;top:5px" width="16" height="16" viewBox="0 0 16 16" fill="none" stroke="#c0c0c0" stroke-width="1.200"><path d="M3.500 12.500c1.500-1.500 1-4 1.500-6 .5-2 1.500-3 3-3s2.500 1 3 3c.5 2 0 4.500 1.500 6z" stroke-linejoin="round"/><path d="M7 14h2"/></svg>
</div>

<!-- faint watermark -->
<svg class="abs" style="left:355px;top:355px" width="500" height="100" viewBox="0 0 500 100" fill="none">
 <circle cx="45" cy="43" r="36" fill="rgba(150,50,30,.13)"/>
 <path d="M466 24h12c1 14 0 26-3 36M466 56l16 24" stroke="rgba(130,50,25,.22)" stroke-width="7" stroke-linecap="round" stroke-linejoin="round"/>
</svg>
<!-- OVERLAY -->
<div id="overlay" class="abs" style="left:382px;top:318px;width:438px;height:151px;overflow:hidden;opacity:.92;background:linear-gradient(165deg,#1c8aec 0%,#1e94ec 45%,#25a3ee 100%)">
 <svg class="abs" style="left:0;top:0" width="438" height="151" viewBox="0 0 438 151">
  <g transform="translate(8 13) rotate(-72)"><path d="M0 23C-7.7 12.7 -17.5 -3.4 -10.5 -16.1C-4.9 -25.3 4.9 -25.3 10.5 -16.1C17.5 -3.4 7.7 12.7 0 23z" fill="#27ae42"/></g>
  <path d="M0 12.500h9l2 1.800-2 1.700h-9z" fill="#1f8fe4"/>
  <g transform="translate(160 9) rotate(30)"><path d="M0 15C-5.5 8.2 -12.5 -2.2 -7.5 -10.5C-3.5 -16.5 3.5 -16.5 7.5 -10.5C12.5 -2.2 5.5 8.2 0 15z" fill="#17a88e"/><path d="M0 9.0C1.5 1.5 1.0 -6.0 -1.0 -14.2" fill="none" stroke="#1e9cb4" stroke-width="1.800" stroke-linecap="round"/></g>
  <g transform="translate(186 -5) rotate(85)"><path d="M0 13C-7.7 7.2 -17.5 -1.9 -10.5 -9.1C-4.9 -14.3 4.9 -14.3 10.5 -9.1C17.5 -1.9 7.7 7.2 0 13z" fill="#2bb04a"/></g>
  <g transform="translate(223 -2) rotate(80)"><path d="M0 4C-2.8 2.2 -6.2 -0.6 -3.8 -2.8C-1.8 -4.4 1.8 -4.4 3.8 -2.8C6.2 -0.6 2.8 2.2 0 4z" fill="#d9dd12"/></g>
  <g transform="translate(233 17) rotate(22)"><path d="M0 15.5C-5.8 8.5 -13.1 -2.3 -7.9 -10.8C-3.7 -17.1 3.7 -17.1 7.9 -10.8C13.1 -2.3 5.8 8.5 0 15.5z" fill="#e0e012"/><path d="M0 9.3C1.6 1.6 1.1 -6.2 -1.1 -14.7" fill="none" stroke="#c4cc10" stroke-width="1.800" stroke-linecap="round"/></g>
  <g transform="translate(258 3) rotate(-70)"><path d="M0 15C-5.5 8.2 -12.5 -2.2 -7.5 -10.5C-3.5 -16.5 3.5 -16.5 7.5 -10.5C12.5 -2.2 5.5 8.2 0 15z" fill="#14a48c"/><path d="M0 9.0C1.5 1.5 1.0 -6.0 -1.0 -14.2" fill="none" stroke="#1e9cb4" stroke-width="1.800" stroke-linecap="round"/></g>
  <g transform="translate(418 20) rotate(20)"><path d="M0 15.5C-5.8 8.5 -13.1 -2.3 -7.9 -10.8C-3.7 -17.1 3.7 -17.1 7.9 -10.8C13.1 -2.3 5.8 8.5 0 15.5z" fill="#e0e012"/><path d="M0 9.3C1.6 1.6 1.1 -6.2 -1.1 -14.7" fill="none" stroke="#c4cc10" stroke-width="1.800" stroke-linecap="round"/></g>
  <g transform="translate(436 9) rotate(-25)"><path d="M0 9C-3.3 5.0 -7.5 -1.3 -4.5 -6.3C-2.1 -9.9 2.1 -9.9 4.5 -6.3C7.5 -1.3 3.3 5.0 0 9z" fill="#12a490"/></g>
  <g transform="translate(410 -2) rotate(70)"><path d="M0 8C-2.8 4.4 -6.2 -1.2 -3.8 -5.6C-1.8 -8.8 1.8 -8.8 3.8 -5.6C6.2 -1.2 2.8 4.4 0 8z" fill="#b6d022"/></g>
  <g transform="translate(10 133) rotate(75)"><path d="M0 14C-5.0 7.7 -11.2 -2.1 -6.8 -9.8C-3.1 -15.4 3.1 -15.4 6.8 -9.8C11.2 -2.1 5.0 7.7 0 14z" fill="#2aae4a"/><path d="M0 8.4C1.3 1.4 0.9 -5.6 -0.9 -13.3" fill="none" stroke="#22a0a0" stroke-width="1.800" stroke-linecap="round"/></g>
  <g transform="translate(36 134) rotate(155)"><path d="M0 15C-5.2 8.2 -11.9 -2.2 -7.1 -10.5C-3.3 -16.5 3.3 -16.5 7.1 -10.5C11.9 -2.2 5.2 8.2 0 15z" fill="#d8dc10"/><path d="M0 9.0C1.4 1.5 1.0 -6.0 -1.0 -14.2" fill="none" stroke="#bcc810" stroke-width="1.800" stroke-linecap="round"/></g>
  <g transform="translate(62 143) rotate(-110)"><path d="M0 15C-5.0 8.2 -11.2 -2.2 -6.8 -10.5C-3.1 -16.5 3.1 -16.5 6.8 -10.5C11.2 -2.2 5.0 8.2 0 15z" fill="#a8cc22"/><path d="M0 9.0C1.3 1.5 0.9 -6.0 -0.9 -14.2" fill="none" stroke="#90bc20" stroke-width="1.800" stroke-linecap="round"/></g>
  <g transform="translate(4 150) rotate(40)"><path d="M0 7C-2.8 3.9 -6.2 -1.1 -3.8 -4.9C-1.8 -7.7 1.8 -7.7 3.8 -4.9C6.2 -1.1 2.8 3.9 0 7z" fill="#169e8a"/></g>
  <g transform="translate(426 141) rotate(115)"><path d="M0 16C-5.5 8.8 -12.5 -2.4 -7.5 -11.2C-3.5 -17.6 3.5 -17.6 7.5 -11.2C12.5 -2.4 5.5 8.8 0 16z" fill="#dedc12"/><path d="M0 9.6C1.5 1.6 1.0 -6.4 -1.0 -15.2" fill="none" stroke="#c4c810" stroke-width="1.800" stroke-linecap="round"/></g>
 </svg>
</div>
</body>
</html>
